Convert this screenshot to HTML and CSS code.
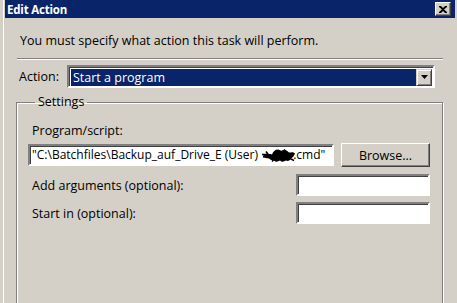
FILE: index.html
```html
<!DOCTYPE html>
<html lang="en">
<head>
    <meta charset="UTF-8">
    <title>Edit Action</title>
    <link rel="stylesheet" href="styles.css">
</head>
<body>
    <div class="window">
        <div class="titlebar">
            <span class="title">Edit Action</span>
            <span class="close-btn">
                <svg width="8" height="7" viewBox="0 0 8 7"><path d="M0 0h2l2 2 2-2h2v1L5 3.5 8 6v1H6L4 5 2 7H0V6l3-2.5L0 1z" fill="#000"/></svg>
            </span>
        </div>

        <div class="content">
            <p class="intro">You must specify what action this task will perform.</p>
            <div class="separator"></div>

            <div class="action-row">
                <span class="action-label">Action:</span>
                <div class="combo">
                    <div class="combo-value">Start a program</div>
                    <div class="combo-btn">
                        <svg width="7" height="4" viewBox="0 0 7 4"><path d="M0 0h7L3.5 4z" fill="#000"/></svg>
                    </div>
                </div>
            </div>

            <fieldset class="group">
                <legend>Settings</legend>
                <div class="field-label">Program/script:</div>
                <div class="program-row">
                    <div class="textbox program-box">"C:\Batchfiles\Backup_auf_Drive_E (User) <svg class="scribble" width="34" height="14" viewBox="0 0 34 13"><path d="M1 7c4-1 6-2 9-1 1-3 3-5 6-5 2 0 3 2 4 1 3-1 5 0 7 2 2 0 4-1 6 1-1 2-2 4-4 5-1 2-3 3-5 2-2 1-4 2-6 0-2 1-4 2-6 0-2 0-4-1-5-2-2 0-4-1-6-1z" fill="#000"/><path d="M0 6h6M4 3l3 4M22 1l3 3M28 10l4 2M12 11l-2 2" stroke="#000" stroke-width="1.5"/></svg>.cmd"</div>
                    <button class="btn">Browse...</button>
                </div>
                <div class="opt-row">
                    <span class="opt-label">Add arguments (optional):</span>
                    <div class="textbox small-box"></div>
                </div>
                <div class="opt-row">
                    <span class="opt-label">Start in (optional):</span>
                    <div class="textbox small-box"></div>
                </div>
            </fieldset>
        </div>
    </div>
</body>
</html>
```

FILE: styles.css
```css
html, body { margin: 0; height: 100%; overflow: hidden; }
body { background-color: #d4d0c8; font-family: 'Open Sans', 'Liberation Sans', sans-serif; font-size: 12.5px; color: #000; }

/* Marco de la ventana */
.window { margin-left: 3px; border-left: 1px solid #fff; padding-left: 1px; height: 100%; overflow: hidden; }
.titlebar { height: 18px; background-color: #0a246a; display: flex; align-items: center; justify-content: space-between; padding: 0 4px 0 2px; margin-right: 2px; }
.title { color: #fff; font-weight: bold; font-size: 11.5px; letter-spacing: -0.2px; }
.close-btn { width: 14px; height: 12px; background: #d4d0c8; display: flex; align-items: center; justify-content: center; border: 1px solid; border-color: #fff #404040 #404040 #fff; box-shadow: inset -1px -1px 0 #808080; }

/* Contenido */
.content { padding: 0 14px 0 12px; }
.intro { margin: 16px 0 0 3px; line-height: 14px; }
.separator { margin-top: 10px; border-top: 1px solid #808080; border-bottom: 1px solid #fff; height: 0; }

.action-row { display: flex; align-items: center; margin-top: 5px; padding-right: 8px; }
.action-label { width: 48px; padding-left: 2px; }
.combo { flex: 1; height: 19px; display: flex; align-items: center; background: #fff; padding: 0 1px 0 2px; border: 2px solid; border-color: #808080 #fff #fff #808080; box-shadow: inset 1px 1px 0 #404040; }
.combo-value { flex: 1; height: 17px; margin-top: 1px; background-color: #0a246a; color: #fff; line-height: 17px; padding-left: 2px; }
.combo-btn { width: 16px; height: 17px; margin-top: 1px; background: #d4d0c8; border: 1px solid; border-color: #d4d0c8 #404040 #404040 #d4d0c8; box-shadow: inset 1px 1px 0 #fff, inset -1px -1px 0 #808080; display: flex; align-items: center; justify-content: center; box-sizing: border-box; }

.group { margin: 7px 0 0 -1px; padding: 0 12px 0 11px; height: 230px; border: 1px solid #808080; box-shadow: 1px 1px 0 #fff, inset 1px 1px 0 #fff; }
.group legend { margin-left: 7px; padding: 0 3px; line-height: 14px; }
.field-label { margin-top: 15px; padding-left: 4px; line-height: 14px; }

.program-row { display: flex; align-items: center; margin-top: 5px; }
.textbox { background: #fff; height: 18px; border: 2px solid; border-color: #808080 #fff #fff #808080; box-shadow: inset 1px 1px 0 #404040; box-sizing: content-box; }
.program-box { width: 300px; padding-left: 2px; font-size: 12px; line-height: 18px; white-space: nowrap; overflow: hidden; }
.scribble { vertical-align: -3px; margin: 0 -3px 0 1px; }
.btn { margin-left: 7px; width: 89px; height: 24px; font: inherit; background: #d4d0c8; border: 1px solid; border-color: #fff #404040 #404040 #fff; box-shadow: inset -1px -1px 0 #808080; padding: 0; }

.opt-row { display: flex; align-items: center; justify-content: space-between; margin-top: 7px; }
.opt-row + .opt-row { margin-top: 6px; }
.opt-label { padding-left: 4px; }
.small-box { width: 130px; }
```
